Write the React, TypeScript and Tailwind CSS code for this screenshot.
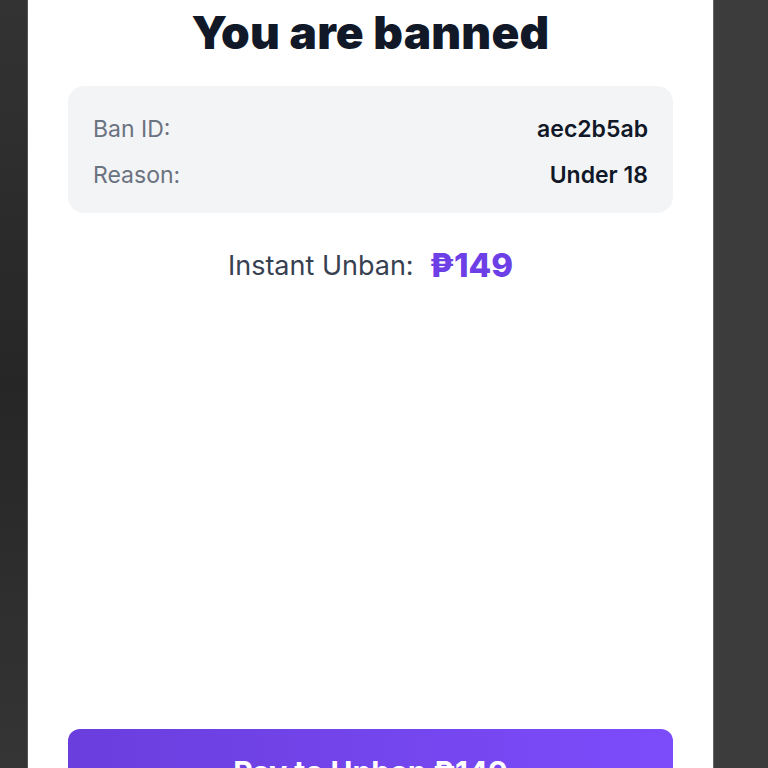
import React from "react";

export default function App() {
  return (
    <div className="w-[768px] h-[768px] overflow-hidden flex bg-[#3a3a3a]" style={{ fontFamily: "Inter, 'Liberation Sans', sans-serif" }}>
      <div className="w-[28px] h-full bg-gradient-to-b from-[#333333] via-[#262626] to-[#353535] shrink-0 border-r border-[#555]" />
      <div className="w-[685px] h-[850px] bg-white shrink-0 flex flex-col px-[40px]">
        <h1 className="mt-[5px] text-center text-[46px] leading-[54px] font-black text-[#111827] tracking-[0.2px]">
          You are banned
        </h1>
        <div className="mt-[27px] bg-[#f3f4f6] rounded-2xl px-[25px] pt-[28px] pb-[23px] flex flex-col gap-[16px]">
          <div className="h-[30px] flex items-center justify-between text-[23px]">
            <span className="text-[#6b7280]">Ban ID:</span>
            <span className="font-semibold text-[#111827]">aec2b5ab</span>
          </div>
          <div className="h-[30px] flex items-center justify-between text-[23px]">
            <span className="text-[#6b7280]">Reason:</span>
            <span className="font-semibold text-[#111827]">Under 18</span>
          </div>
        </div>
        <div className="mt-[36px] h-[34px] flex items-center justify-center gap-[16px]">
          <span className="text-[27px] text-[#374151]">Instant Unban:</span>
          <span className="text-[33px] font-extrabold text-[#6d3fe6]">₱149</span>
        </div>
        <div className="mt-[446px] pt-[25px] pb-5 rounded-xl bg-gradient-to-r from-[#6a3edd] to-[#7c4cfb] flex items-center justify-center">
          <span className="text-white text-[30px] leading-[36px] font-bold">Pay to Unban ₱149</span>
        </div>
      </div>
      <div className="flex-1 h-full bg-[#3c3c3c] border-l border-[#666]" />
    </div>
  );
}
